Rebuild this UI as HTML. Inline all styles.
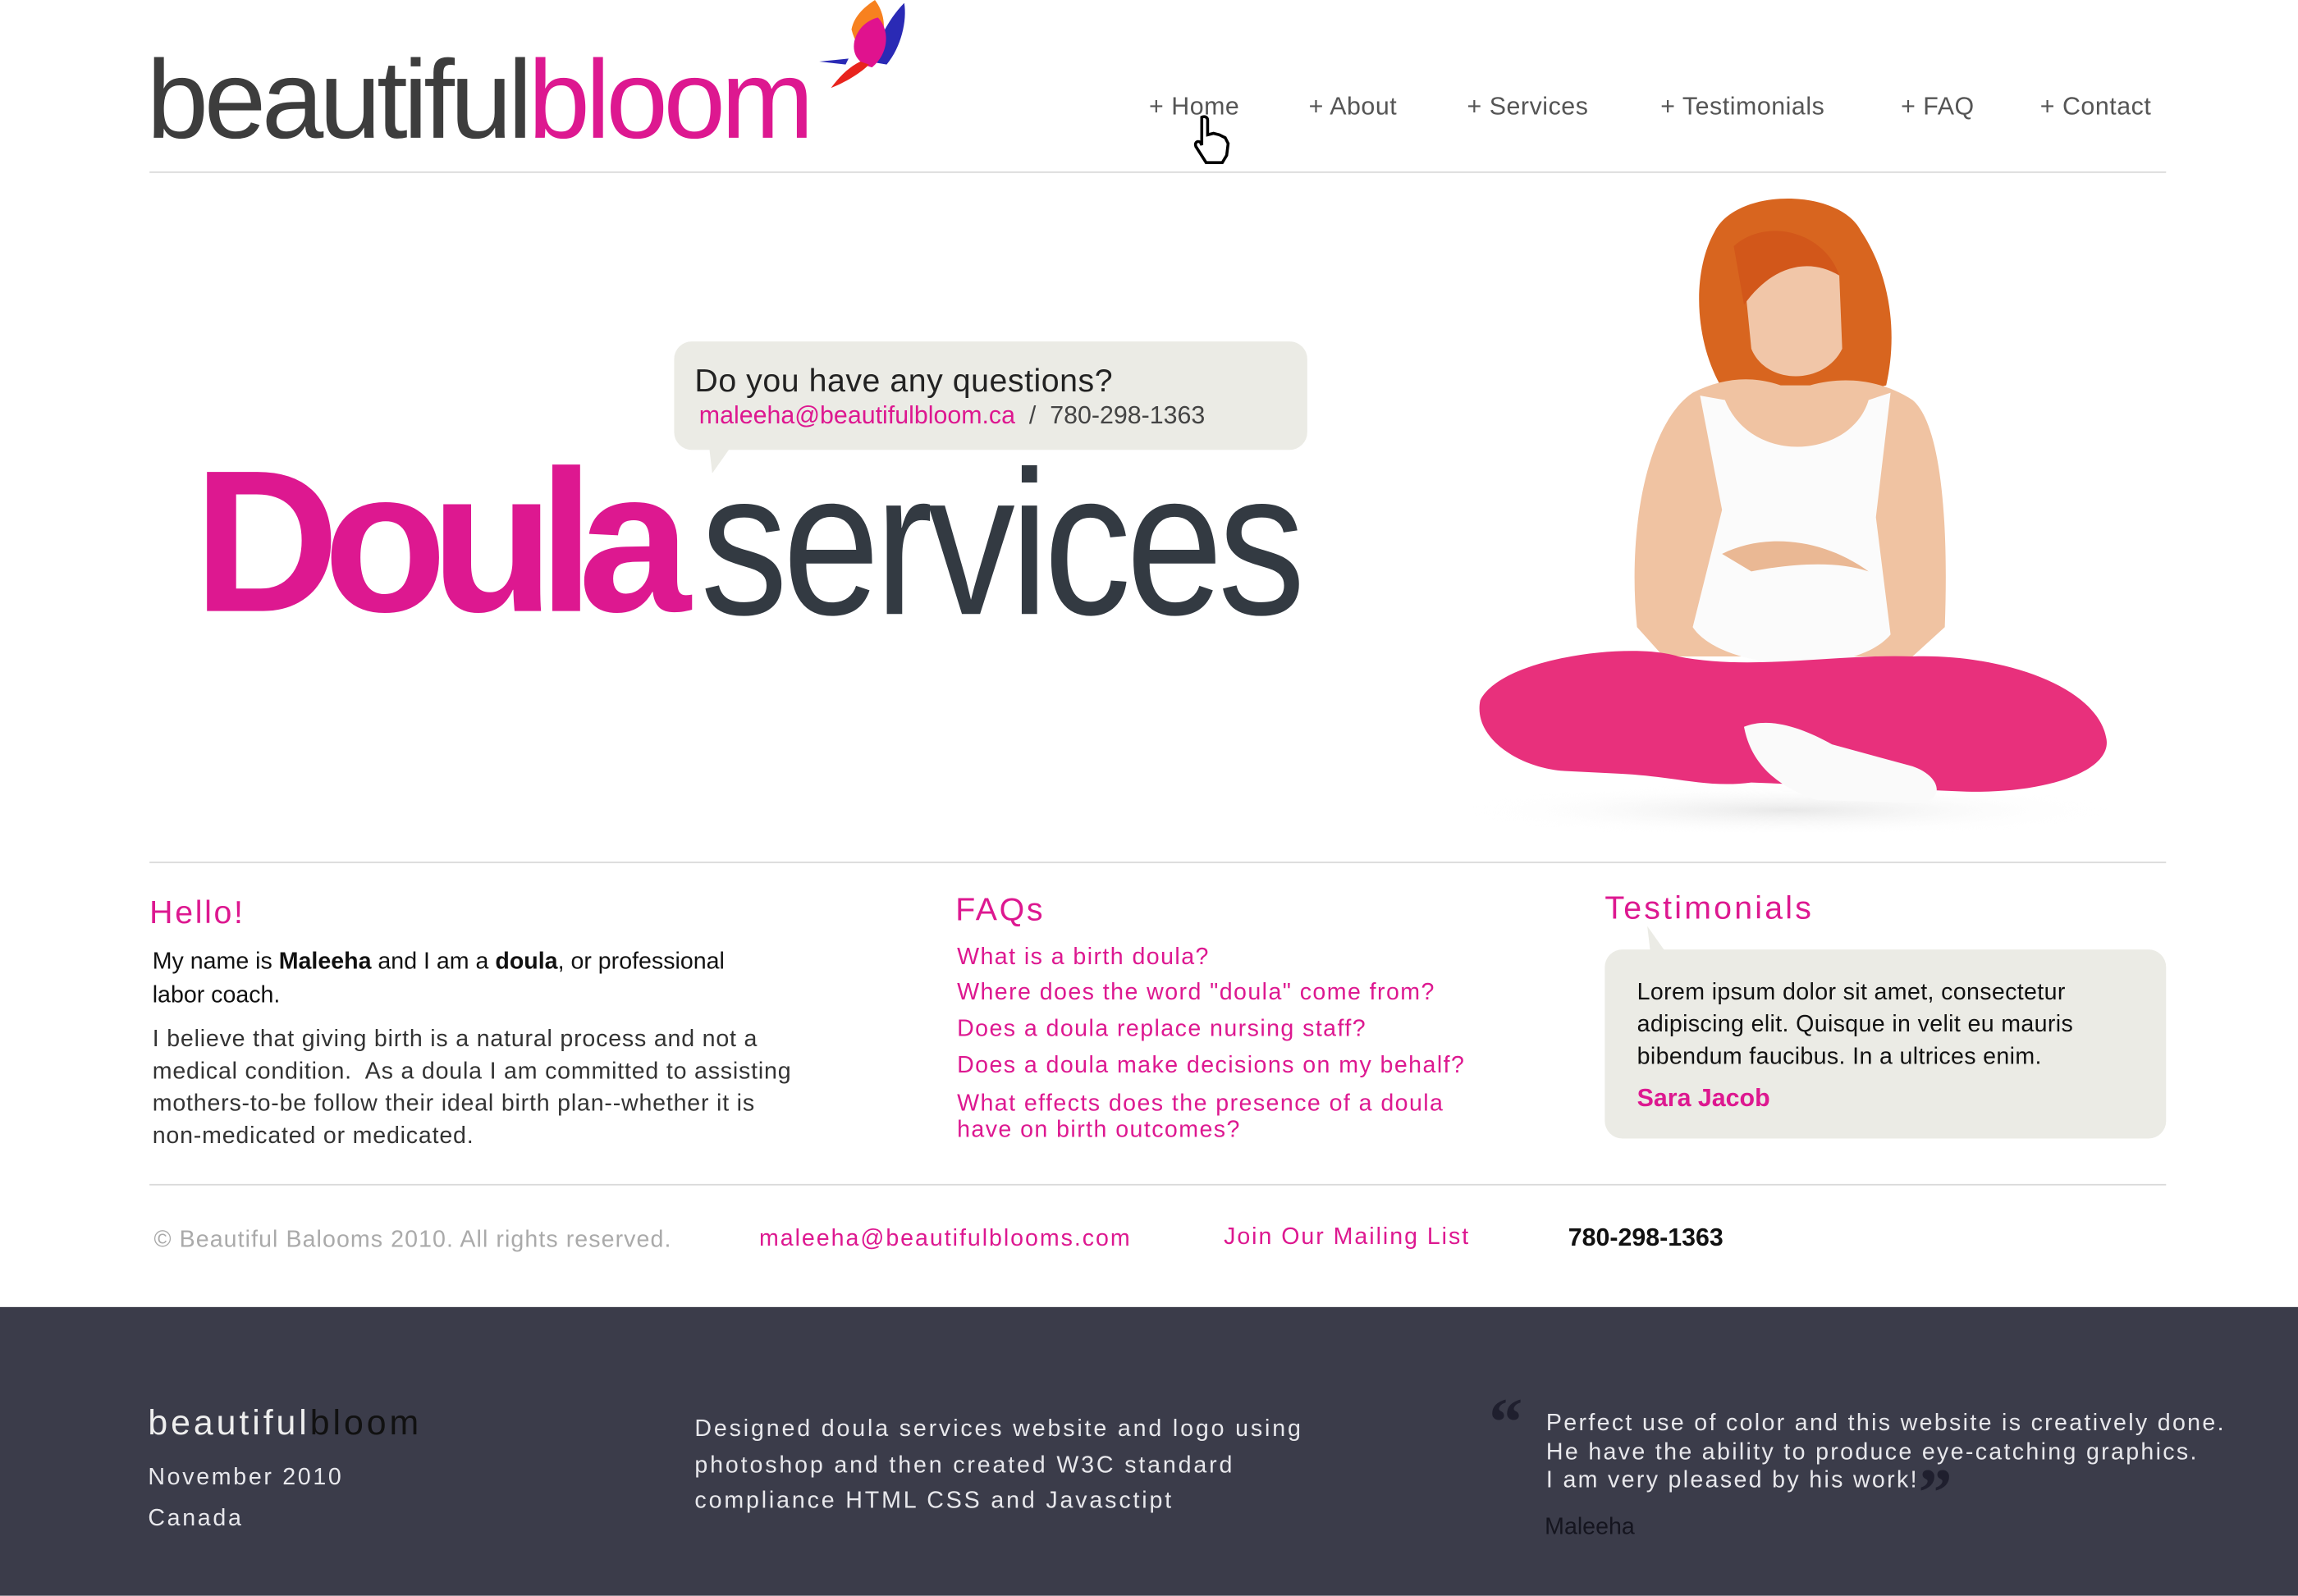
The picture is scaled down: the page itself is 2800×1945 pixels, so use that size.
<!DOCTYPE html>
<html><head><meta charset="utf-8">
<style>
html,body{margin:0;padding:0;width:2800px;height:1944px;overflow:hidden;background:#fff;}
#w{position:absolute;left:0;top:0;width:1568px;height:1089px;transform:scale(1.78571);transform-origin:0 0;font-family:"Liberation Sans",Arial,sans-serif;}
.a{position:absolute;white-space:nowrap;line-height:1;}
.pk{color:#dd1890;}
.hr{position:absolute;height:1px;background:#d9d9d9;left:102px;width:1376px;}
.nav{font-size:17px;color:#555;top:64px;letter-spacing:0.3px;}
.faq{font-size:16px;color:#dd1890;letter-spacing:0.8px;}
.ft{color:#e8e8ec;font-size:16px;letter-spacing:1.5px;}
</style></head><body><div id="w">

<div class="a" style="left:100px;top:31px;font-size:76px;letter-spacing:-3px;color:#3d3d3d;">beautiful<span class="pk">bloom</span></div>
<svg style="position:absolute;left:553px;top:0" width="70" height="70" viewBox="0 0 70 70">
<path d="M44 0 C50 8 52 18 48 30 L40 40 C34 34 30 28 28 20 C30 10 38 4 44 0Z" fill="#f7811f"/>
<path d="M64 2 C66 14 62 32 52 44 L40 42 C46 30 52 14 64 2Z" fill="#2a2ab5"/>
<path d="M46 12 C54 20 54 36 42 46 C34 44 28 38 30 28 C32 20 38 14 46 12Z" fill="#e0128e"/>
<path d="M40 44 C34 50 24 56 14 60 C20 52 26 46 34 42Z" fill="#e8231d"/>
<path d="M6 42 L26 40 L24 44Z" fill="#2a2ab5"/>
</svg>

<div class="a nav pk" style="left:784px;">+ Home</div>
<div class="a nav" style="left:893px;">+ About</div>
<div class="a nav" style="left:1001px;">+ Services</div>
<div class="a nav" style="left:1133px;">+ Testimonials</div>
<div class="a nav" style="left:1297px;">+ FAQ</div>
<div class="a nav" style="left:1392px;">+ Contact</div>
<svg style="position:absolute;left:812px;top:78px" width="30" height="36" viewBox="0 0 30 36"><path d="M8 2 C10 1 12 2 12 4 L12 14 L16 13 L20 14 L24 16 L26 20 L25 28 L22 33 L11 33 L4 22 C3 19 5 18 7 19 L8 21 Z" fill="#fff" stroke="#000" stroke-width="2"/></svg>

<div class="hr" style="top:117px;"></div>

<div style="position:absolute;left:460px;top:233px;width:432px;height:74px;background:#ebebe5;border-radius:12px;"></div>
<svg style="position:absolute;left:482px;top:306px" width="20" height="18"><path d="M2 0 L16 0 L4 17Z" fill="#ebebe5"/></svg>
<div class="a" style="left:474px;top:249px;font-size:22px;color:#222;letter-spacing:0.3px;">Do you have any questions?</div>
<div class="a" style="left:477px;top:275px;font-size:17px;color:#444;"><span class="pk">maleeha@beautifulbloom.ca</span> &nbsp;/ &nbsp;780-298-1363</div>

<div class="a pk" style="left:132px;top:301px;font-size:138px;font-weight:bold;letter-spacing:-11px;">Doula</div>
<div class="a" style="left:478px;top:301px;font-size:140px;color:#333a42;letter-spacing:-4px;transform:scaleX(0.85);transform-origin:0 0;">services</div>

<svg style="position:absolute;left:1005px;top:128px" width="440" height="440" viewBox="0 0 440 440">
<defs><radialGradient id="sh" cx="50%" cy="50%" r="50%"><stop offset="0" stop-color="#e8e8e8"/><stop offset="1" stop-color="#fff" stop-opacity="0"/></radialGradient></defs>
<ellipse cx="215" cy="425" rx="220" ry="18" fill="url(#sh)"/>
<path d="M165 30 C180 0 250 0 265 30 C285 60 290 100 282 135 L262 140 L172 140 C152 110 148 60 165 30Z" fill="#d8651f"/>
<path d="M185 60 C190 40 240 40 250 60 L252 110 C240 135 200 135 190 110Z" fill="#f1c6a8"/>
<path d="M178 40 C200 20 240 30 250 60 C230 48 205 52 185 80Z" fill="#d2571a"/>
<path d="M150 140 C170 130 190 128 210 135 L230 135 C255 128 280 132 300 145 C318 160 325 220 322 300 L300 320 L130 320 L112 300 C105 230 120 160 150 140Z" fill="#f0c3a2"/>
<path d="M155 142 L170 220 L150 300 C170 330 260 335 285 305 L275 225 L285 140 L270 145 C258 185 190 190 172 145Z" fill="#fbfbfb"/>
<path d="M140 320 C110 310 20 320 5 350 C0 375 30 395 60 398 L100 400 C140 402 160 410 190 406 L330 412 C390 415 438 398 432 375 C425 340 360 318 300 320 C250 318 190 330 140 320Z" fill="#e8307c"/>
<path d="M185 368 C200 362 220 366 245 380 L300 395 C320 402 322 418 305 420 L235 418 C210 410 190 395 185 368Z" fill="#fafafa"/>
<path d="M170 250 C200 235 240 240 270 262 C250 255 220 256 190 262Z" fill="#eab894"/>
</svg>

<div class="hr" style="top:588px;"></div>

<div class="a pk" style="left:102px;top:612px;font-size:22px;letter-spacing:1.5px;">Hello!</div>
<div class="a" style="left:104px;top:645px;font-size:16px;line-height:23px;color:#111;">My name is <b>Maleeha</b> and I am a <b>doula</b>, or professional<br>labor coach.</div>
<div class="a" style="left:104px;top:699px;font-size:16px;line-height:22px;color:#333;letter-spacing:0.45px;">I believe that giving birth is a natural process and not a<br>medical condition.&nbsp; As a doula I am committed to assisting<br>mothers-to-be follow their ideal birth plan--whether it is<br>non-medicated or medicated.</div>

<div class="a pk" style="left:652px;top:610px;font-size:22px;letter-spacing:1.5px;">FAQs</div>
<div class="a faq" style="left:653px;top:646px;">What is a birth doula?</div>
<div class="a faq" style="left:653px;top:670px;">Where does the word "doula" come from?</div>
<div class="a faq" style="left:653px;top:695px;">Does a doula replace nursing staff?</div>
<div class="a faq" style="left:653px;top:720px;">Does a doula make decisions on my behalf?</div>
<div class="a faq" style="left:653px;top:745px;line-height:18px;">What effects does the presence of a doula<br>have on birth outcomes?</div>

<div class="a pk" style="left:1095px;top:609px;font-size:22px;letter-spacing:1.8px;">Testimonials</div>
<div style="position:absolute;left:1095px;top:648px;width:383px;height:129px;background:#ebebe5;border-radius:12px;"></div>
<svg style="position:absolute;left:1122px;top:632px" width="20" height="18"><path d="M2 0 L14 17 L4 17Z" fill="#ebebe5"/></svg>
<div style="position:absolute;left:1117px;top:667px;width:345px;font-size:16px;line-height:22px;color:#111;letter-spacing:0.2px;">Lorem ipsum dolor sit amet, consectetur adipiscing elit. Quisque in velit eu mauris bibendum faucibus. In a ultrices enim.</div>
<div class="a pk" style="left:1117px;top:741px;font-size:17px;font-weight:bold;">Sara Jacob</div>

<div class="hr" style="top:808px;"></div>

<div class="a" style="left:105px;top:839px;font-size:16px;color:#aaa;letter-spacing:0.6px;">© Beautiful Balooms 2010. All rights reserved.</div>
<div class="a pk" style="left:518px;top:838px;font-size:16px;letter-spacing:1.1px;">maleeha@beautifulblooms.com</div>
<div class="a pk" style="left:835px;top:837px;font-size:16px;letter-spacing:1.1px;">Join Our Mailing List</div>
<div class="a" style="left:1070px;top:836px;font-size:17px;font-weight:bold;color:#111;">780-298-1363</div>

<div style="position:absolute;left:0;top:892px;width:1568px;height:197px;background:#3b3c4a;"></div>
<div class="a" style="left:101px;top:960px;font-size:24px;color:#eee;letter-spacing:2.2px;">beautiful<span style="color:#111">bloom</span></div>
<div class="a ft" style="left:101px;top:1001px;">November 2010</div>
<div class="a ft" style="left:101px;top:1029px;">Canada</div>
<div class="a ft" style="left:474px;top:964px;line-height:24.5px;letter-spacing:1.6px;">Designed doula services website and logo using<br>photoshop and then created W3C standard<br>compliance HTML CSS and Javasctipt</div>
<div class="a" style="left:1016px;top:948px;font-size:46px;font-weight:bold;color:#1f1f2e;font-family:'Liberation Serif',serif;">“</div>
<div class="a ft" style="left:1055px;top:962px;line-height:19.5px;letter-spacing:1.3px;">Perfect use of color and this website is creatively done.<br>He have the ability to produce eye-catching graphics.<br>I am very pleased by his work!</div>
<div class="a" style="left:1309px;top:996px;font-size:46px;font-weight:bold;color:#1f1f2e;font-family:'Liberation Serif',serif;">”</div>
<div class="a" style="left:1054px;top:1035px;font-size:16px;color:#15151f;">Maleeha</div>

</div></body></html>
